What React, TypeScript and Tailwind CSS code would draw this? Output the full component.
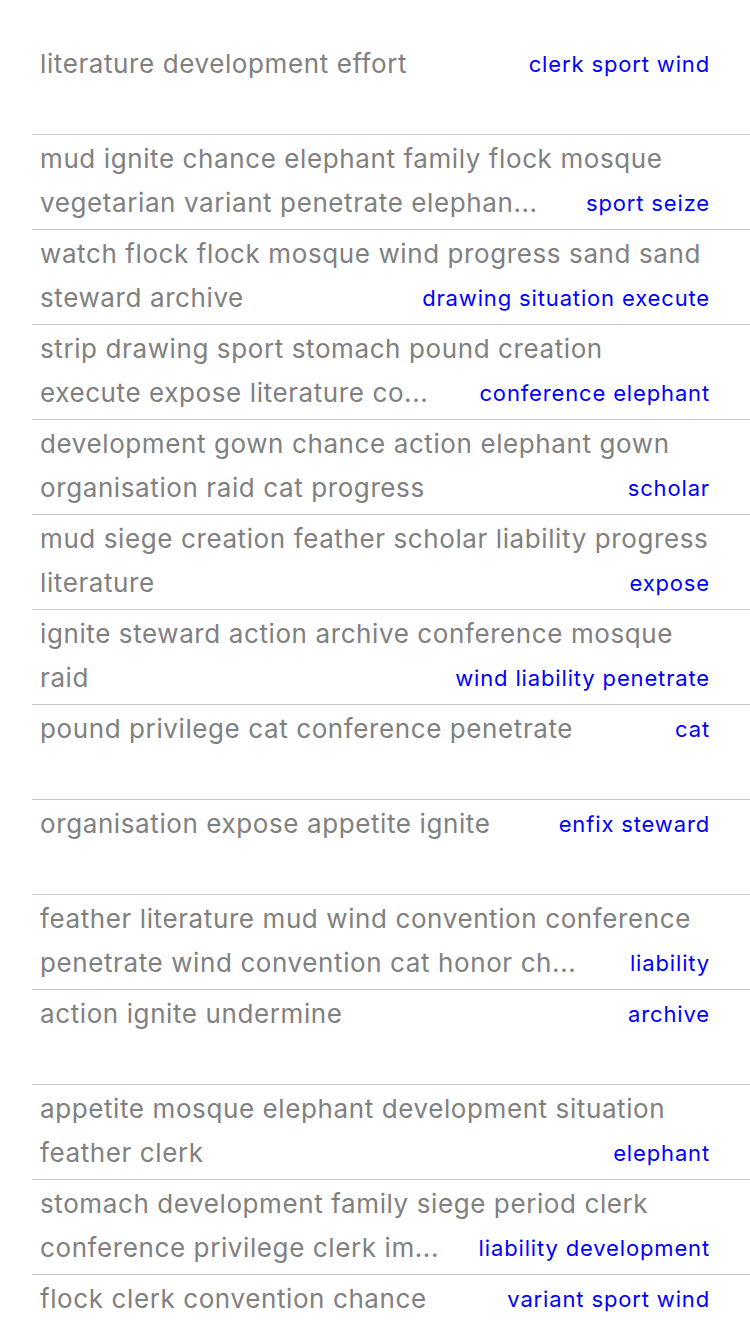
import React from 'react';

interface RowProps {
  lines: string[];
  tag: string;
}

const rows: RowProps[] = [
  { lines: ['literature development effort'], tag: 'clerk sport wind' },
  { lines: ['mud ignite chance elephant family flock mosque', 'vegetarian variant penetrate elephan...'], tag: 'sport seize' },
  { lines: ['watch flock flock mosque wind progress sand sand', 'steward archive'], tag: 'drawing situation execute' },
  { lines: ['strip drawing sport stomach pound creation', 'execute expose literature co...'], tag: 'conference elephant' },
  { lines: ['development gown chance action elephant gown', 'organisation raid cat progress'], tag: 'scholar' },
  { lines: ['mud siege creation feather scholar liability progress', 'literature'], tag: 'expose' },
  { lines: ['ignite steward action archive conference mosque', 'raid'], tag: 'wind liability penetrate' },
  { lines: ['pound privilege cat conference penetrate'], tag: 'cat' },
  { lines: ['organisation expose appetite ignite'], tag: 'enfix steward' },
  { lines: ['feather literature mud wind convention conference', 'penetrate wind convention cat honor ch...'], tag: 'liability' },
  { lines: ['action ignite undermine'], tag: 'archive' },
  { lines: ['appetite mosque elephant development situation', 'feather clerk'], tag: 'elephant' },
  { lines: ['stomach development family siege period clerk', 'conference privilege clerk im...'], tag: 'liability development' },
  { lines: ['flock clerk convention chance'], tag: 'variant sport wind' },
];

const Row: React.FC<RowProps> = ({ lines, tag }) => {
  const last = lines[lines.length - 1];
  const first = lines.length > 1 ? lines.slice(0, -1) : [];
  return (
    <div className="ml-[32px] h-[95px] shrink-0 border-b border-[#c8c7cc] pl-[8px] pr-[40px] pt-[2px]">
      {first.map((l) => (
        <div key={l} className="text-[26px] leading-[44px] tracking-[0.6px] text-[#808080] whitespace-nowrap">
          {l}
        </div>
      ))}
      <div className="flex items-center justify-between gap-4">
        <span className="min-w-0 truncate text-[26px] leading-[44px] tracking-[0.6px] text-[#808080]">{last}</span>
        <span className="shrink-0 text-[22px] leading-[44px] tracking-[0.85px] text-[#0000ff]">{tag}</span>
      </div>
    </div>
  );
};

export default function App() {
  return (
    <div
      className="flex h-[1334px] w-[750px] flex-col overflow-hidden bg-white pt-[40px]"
      style={{ fontFamily: 'Inter, "Noto Sans", sans-serif' }}
    >
      {rows.map((r) => (
        <Row key={r.lines[0]} {...r} />
      ))}
    </div>
  );
}
